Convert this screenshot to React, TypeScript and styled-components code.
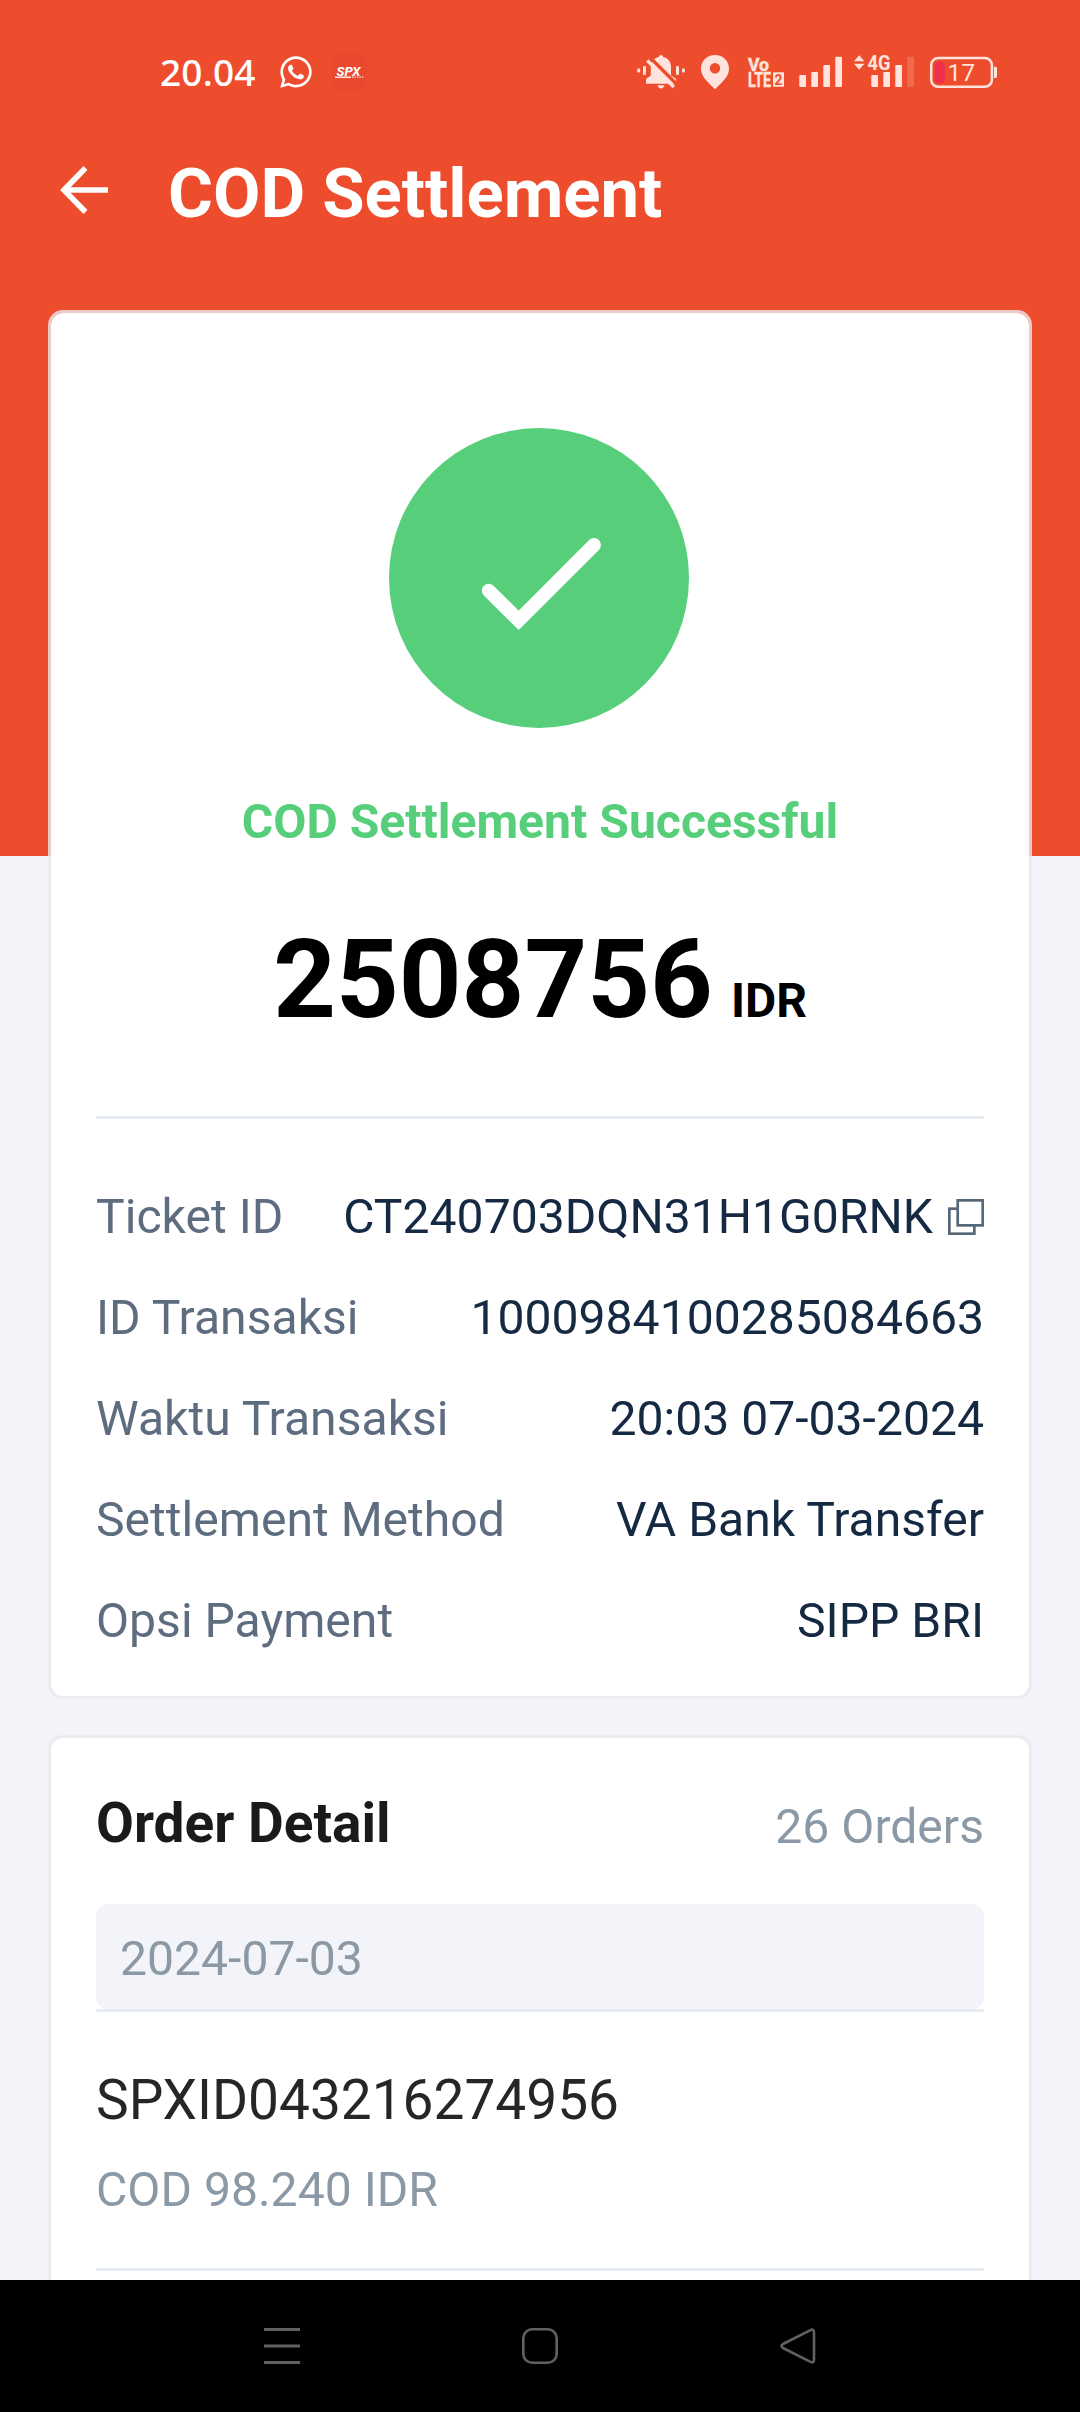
import React from "react";
import styled, { createGlobalStyle } from "styled-components";
import { FaWhatsapp } from "react-icons/fa";

const ORANGE = "#ee4d2d";
const TINT = "#ffe3dc";

const GlobalStyle = createGlobalStyle`
  *, *::before, *::after { box-sizing: border-box; }
  body { margin: 0; background: #f3f4f9; font-family: Roboto, "Noto Sans", sans-serif; }
`;

const Screen = styled.div`
  width: 1080px;
  height: 2412px;
  display: flex;
  flex-direction: column;
  overflow: hidden;
  background: linear-gradient(${ORANGE} 856px, #f3f4f9 856px);
`;

const StatusBar = styled.header`
  flex: none;
  height: 144px;
  padding: 0 82px 0 160px;
  display: flex;
  justify-content: space-between;
  align-items: center;
  color: #fff;
`;

const StatusGroup = styled.div`
  display: flex;
  align-items: center;
`;

const Clock = styled.span`
  width: 118px;
  font: 500 37px/40px "Noto Sans", sans-serif;
  letter-spacing: 0.2px;
`;

const SpxBadge = styled.svg`
  margin-left: 16px;
`;

const AppBar = styled.div`
  flex: none;
  height: 92px;
  padding-left: 59px;
  display: flex;
  align-items: center;
  gap: 59px;
`;

const Title = styled.h1`
  margin: 7px 0 0;
  color: #fff;
  font-size: 68.8px;
  line-height: 80px;
  font-weight: 700;
`;

const Content = styled.main`
  flex: 1;
  min-height: 0;
  overflow: hidden;
  padding: 74px 48px 0;
  display: flex;
  flex-direction: column;
  gap: 36px;
`;

const Card = styled.section<{ $height: number }>`
  flex: none;
  height: ${(p) => p.$height}px;
  padding: 0 45px;
  display: flex;
  flex-direction: column;
  background: #fff;
  background-clip: padding-box;
  border: 3px solid rgba(232, 233, 237, 0.8);
  border-radius: 15px;
`;

const ResultBlock = styled.div`
  display: flex;
  flex-direction: column;
  align-items: center;
  padding: 115px 2px 71px 0;
`;

const ResultText = styled.p`
  margin: 66px 0 0 2px;
  color: #57ce7a;
  font-size: 48.1px;
  line-height: 56px;
  font-weight: 700;
`;

const Amount = styled.div`
  margin: 65px 0 0 2px;
  display: flex;
  align-items: baseline;
  gap: 18px;
  color: #000;
  font-size: 109.5px;
  line-height: 130px;
  font-weight: 700;
`;

const Currency = styled.span`
  font-size: 48px;
  line-height: 56px;
`;

const Divider = styled.hr`
  flex: none;
  width: 100%;
  height: 3px;
  margin: 0;
  border: 0;
  background: #e7ebf2;
`;

const InfoList = styled.dl`
  margin: 47px 0 0;
`;

const InfoRow = styled.div`
  height: 101px;
  display: flex;
  align-items: center;
  justify-content: space-between;
  font-size: 48.1px;
  line-height: 56px;
`;

const InfoLabel = styled.dt`
  color: #5d6c7f;
`;

const InfoValue = styled.dd`
  margin: 0;
  display: flex;
  align-items: center;
  gap: 15px;
  color: #152943;
`;

const OrderHead = styled.div`
  padding: 53px 0 49px;
  display: flex;
  align-items: flex-end;
  justify-content: space-between;
`;

const OrderTitle = styled.h2`
  margin: 0;
  color: #1a1a1a;
  font-size: 55px;
  line-height: 64px;
  font-weight: 700;
`;

const Muted = styled.span`
  color: #8b99a7;
  font-size: 48.1px;
  line-height: 56px;
`;

const DateBox = styled.div`
  height: 105px;
  padding: 4px 24px 0;
  display: flex;
  align-items: center;
  background: #f3f4f9;
  border-radius: 12px;
`;

const OrderItem = styled.div`
  height: 256px;
  padding-top: 56px;
  display: flex;
  flex-direction: column;
  gap: 30px;
`;

const OrderCode = styled.span`
  color: #262626;
  font-size: 55px;
  line-height: 64px;
`;

const NavBar = styled.nav`
  flex: none;
  height: 132px;
  padding: 0 264px;
  display: flex;
  align-items: center;
  justify-content: space-between;
  background: #000;
`;

const StatusIcons = () => (
  <svg width="362" height="40" viewBox="636 52 362 40" fill={TINT}>
    <rect x="637.3" y="68.6" width="2.8" height="3.8" />
    <rect x="643" y="66.2" width="3" height="8.6" />
    <rect x="676" y="66.2" width="3" height="8.6" />
    <rect x="682" y="68.6" width="2.8" height="3.8" />
    <path d="M661 55c1.400 0 2 .9 2.200 2 4.900 1 7.800 4.900 7.800 10v8.500l4 2.500c1 .7 1.200 1.500 1.200 2.600v3.200h-30.200v-3.200c0-1 .3-1.900 1.200-2.600l3.600-2.500V67c0-5.100 3-9 8-10 .2-1.100.8-2 2.200-2z" />
    <path d="M657.500 85.300h7c-.3 2-1.700 3.200-3.500 3.200s-3.200-1.200-3.500-3.200z" />
    <path d="M650 57.500l27 27" stroke={ORANGE} strokeWidth="3.400" />
    <path d="M647.300 60.500l26.500 26.500" stroke={TINT} strokeWidth="3.400" />
    <path
      fillRule="evenodd"
      d="M715 55c-8.100 0-14 6-14 13.700 0 7.800 6.500 13 14 20.600 7.500-7.600 14-12.800 14-20.600C729 61 723.100 55 715 55zm0 8a5.200 5.200 0 1 1 0 10.400 5.200 5.200 0 0 1 0-10.400z"
    />
    <g fontFamily="Roboto, sans-serif" fontWeight="700">
      <text x="748" y="71" fontSize="18.500" textLength="21" lengthAdjust="spacingAndGlyphs" stroke={TINT} strokeWidth="0.500">Vo</text>
      <text x="748" y="86.700" fontSize="20" textLength="23" lengthAdjust="spacingAndGlyphs" stroke={TINT} strokeWidth="0.500">LTE</text>
      <rect x="773" y="72.300" width="11" height="14.400" />
      <text x="774.500" y="85" fontSize="15.500" textLength="8" lengthAdjust="spacingAndGlyphs" fill={ORANGE}>2</text>
      <text x="867.500" y="70.300" fontSize="20" textLength="23" lengthAdjust="spacingAndGlyphs">4G</text>
    </g>
    <rect x="799.300" y="75" width="6.700" height="12" rx="1" />
    <rect x="811.300" y="72" width="6.700" height="15" rx="1" />
    <rect x="823.300" y="65" width="6.700" height="22" rx="1" />
    <rect x="835.300" y="56.700" width="6.700" height="30.300" rx="1" />
    <path d="M854 61.200l5.200-6 5.200 6zM854 63.800h10.400l-5.200 6z" />
    <rect x="871.300" y="75" width="6.700" height="12" rx="1" />
    <rect x="883.300" y="72" width="6.700" height="15" rx="1" />
    <rect x="895.300" y="65" width="6.700" height="22" rx="1" />
    <rect x="907.300" y="56.700" width="6.700" height="30.300" rx="1" opacity="0.2" />
    <rect x="931.200" y="58" width="60.700" height="28.800" rx="7" fill="none" stroke={TINT} strokeWidth="2.500" />
    <rect x="934.700" y="61.500" width="10.400" height="21.800" rx="4" fill="#ee3148" />
    <path d="M994 66.700h1.500q1.500 0 1.500 1.500v8.300q0 1.500-1.500 1.500H994z" />
    <text x="947.500" y="81.300" fontSize="24" textLength="27.500" fontFamily="Roboto, sans-serif">17</text>
  </svg>
);

const SpxIcon = () => (
  <SpxBadge width="38" height="40" viewBox="329 53 38 40">
    <rect x="330" y="54" width="36" height="38" rx="8" fill="#ea492d" />
    <text x="335.500" y="76.500" fontSize="13.500" textLength="24" lengthAdjust="spacingAndGlyphs" fontFamily="Roboto, sans-serif" fontStyle="italic" fontWeight="700" fill="#fff">SPX</text>
    <path d="M334 78.200h16" stroke="#fff" strokeWidth="1.300" />
    <path d="M351 78.200h12" stroke="#fff" strokeWidth="1.200" strokeDasharray="1.500 1" opacity="0.8" />
  </SpxBadge>
);

const BackIcon = () => (
  <svg width="50" height="50" viewBox="0 0 50 50" fill="none" stroke="#fff" strokeWidth="5.600">
    <path d="M26.500 3L5 25l21.500 22M5 25h44" />
  </svg>
);

const SuccessIcon = () => (
  <svg width="300" height="300" viewBox="0 0 300 300">
    <circle cx="150" cy="150" r="150" fill="#57ce7a" />
    <path d="M99.700 162.600l30 29.700L205 117" fill="none" stroke="#fff" strokeWidth="13.800" strokeLinecap="round" />
  </svg>
);

const CopyIcon = () => (
  <svg width="36" height="36" viewBox="0 0 36 36" fill="#fff" stroke="#566878" strokeWidth="2.700">
    <rect x="1.350" y="9.700" width="25" height="25" />
    <rect x="9.700" y="1.350" width="25" height="25" />
  </svg>
);

const NavIcon = ({ d, width }: { d: string; width: number }) => (
  <svg width="36" height="36" viewBox="0 0 36 36" fill="none" stroke="#626262" strokeWidth={width} strokeLinejoin="round">
    <path d={d} />
  </svg>
);

const details = [
  { label: "Ticket ID", value: "CT240703DQN31H1G0RNK", copy: true },
  { label: "ID Transaksi", value: "1000984100285084663" },
  { label: "Waktu Transaksi", value: "20:03 07-03-2024" },
  { label: "Settlement Method", value: "VA Bank Transfer" },
  { label: "Opsi Payment", value: "SIPP BRI" },
];

export default function App() {
  return (
    <>
      <GlobalStyle />
      <Screen>
        <StatusBar>
          <StatusGroup>
            <Clock>20.04</Clock>
            <FaWhatsapp size={36} />
            <SpxIcon />
          </StatusGroup>
          <StatusIcons />
        </StatusBar>
        <AppBar>
          <BackIcon />
          <Title>COD Settlement</Title>
        </AppBar>
        <Content>
          <Card $height={1389}>
            <ResultBlock>
              <SuccessIcon />
              <ResultText>COD Settlement Successful</ResultText>
              <Amount>
                2508756<Currency>IDR</Currency>
              </Amount>
            </ResultBlock>
            <Divider />
            <InfoList>
              {details.map((row) => (
                <InfoRow key={row.label}>
                  <InfoLabel>{row.label}</InfoLabel>
                  <InfoValue>
                    {row.value}
                    {row.copy && <CopyIcon />}
                  </InfoValue>
                </InfoRow>
              ))}
            </InfoList>
          </Card>
          <Card $height={620}>
            <OrderHead>
              <OrderTitle>Order Detail</OrderTitle>
              <Muted>26 Orders</Muted>
            </OrderHead>
            <DateBox>
              <Muted>2024-07-03</Muted>
            </DateBox>
            <Divider />
            <OrderItem>
              <OrderCode>SPXID043216274956</OrderCode>
              <Muted>COD 98.240 IDR</Muted>
            </OrderItem>
            <Divider />
          </Card>
        </Content>
        <NavBar>
          <NavIcon width={3} d="M0 1.500h36M0 18h36M0 34.500h36" />
          <NavIcon width={2.6} d="M10.300 1.300h15.400a9 9 0 0 1 9 9v15.400a9 9 0 0 1-9 9H10.300a9 9 0 0 1-9-9V10.300a9 9 0 0 1 9-9z" />
          <NavIcon width={2.6} d="M30 2.300L3 16q-3 2 0 4l27 13.700q4 2 4-2V4.300q0-4-4-2z" />
        </NavBar>
      </Screen>
    </>
  );
}
